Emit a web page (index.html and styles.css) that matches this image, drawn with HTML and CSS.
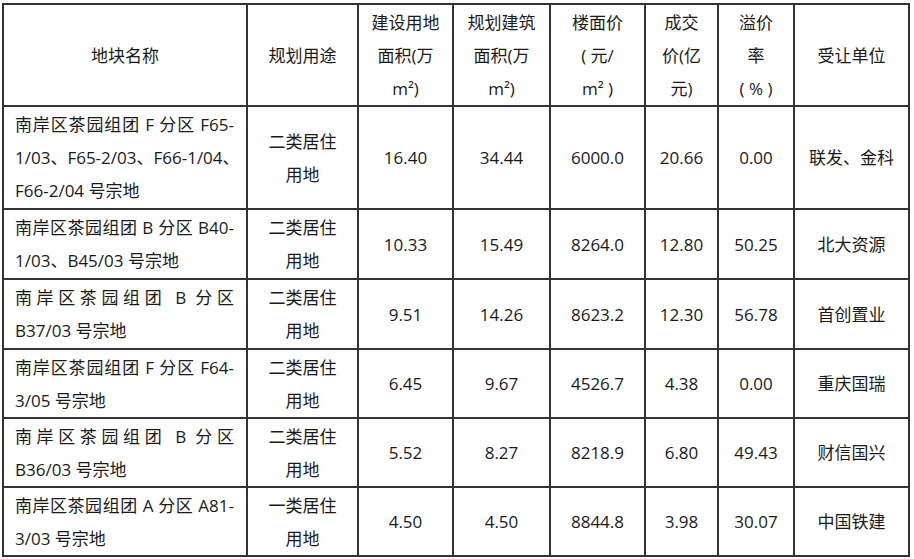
FILE: index.html
```html
<!DOCTYPE html>
<html lang="zh-CN">
<head>
<meta charset="utf-8">
<title>地块成交表</title>
<link rel="stylesheet" href="styles.css">
</head>
<body>
<table class="land">
  <colgroup>
    <col class="c1"><col class="c2"><col class="c3"><col class="c4"><col class="c5"><col class="c6"><col class="c7"><col class="c8">
  </colgroup>
  <thead>
    <tr class="head">
      <th>地块名称</th>
      <th>规划用途</th>
      <th>建设用地<br>面积(万<br>m²)</th>
      <th>规划建筑<br>面积(万<br>m²)</th>
      <th>楼面价<br>( 元/<br>m² )</th>
      <th>成交<br>价(亿<br>元)</th>
      <th>溢价<br>率<br>( % )</th>
      <th>受让单位</th>
    </tr>
  </thead>
  <tbody>
    <tr class="tall">
      <td class="name"><div class="j">南岸区茶园组团 F 分区 F65-</div><div class="j">1/03、F65-2/03、F66-1/04、</div><div>F66-2/04 号宗地</div></td>
      <td>二类居住<br>用地</td>
      <td>16.40</td><td>34.44</td><td>6000.0</td><td>20.66</td><td>0.00</td><td>联发、金科</td>
    </tr>
    <tr class="r2">
      <td class="name"><div class="j">南岸区茶园组团 B 分区 B40-</div><div>1/03、B45/03 号宗地</div></td>
      <td>二类居住<br>用地</td>
      <td>10.33</td><td>15.49</td><td>8264.0</td><td>12.80</td><td>50.25</td><td>北大资源</td>
    </tr>
    <tr class="r2">
      <td class="name"><div class="j">南岸区茶园组团 B 分区</div><div>B37/03 号宗地</div></td>
      <td>二类居住<br>用地</td>
      <td>9.51</td><td>14.26</td><td>8623.2</td><td>12.30</td><td>56.78</td><td>首创置业</td>
    </tr>
    <tr class="r3">
      <td class="name"><div class="j">南岸区茶园组团 F 分区 F64-</div><div>3/05 号宗地</div></td>
      <td>二类居住<br>用地</td>
      <td>6.45</td><td>9.67</td><td>4526.7</td><td>4.38</td><td>0.00</td><td>重庆国瑞</td>
    </tr>
    <tr class="r3">
      <td class="name"><div class="j">南岸区茶园组团 B 分区</div><div>B36/03 号宗地</div></td>
      <td>二类居住<br>用地</td>
      <td>5.52</td><td>8.27</td><td>8218.9</td><td>6.80</td><td>49.43</td><td>财信国兴</td>
    </tr>
    <tr class="r3">
      <td class="name"><div class="j">南岸区茶园组团 A 分区 A81-</div><div>3/03 号宗地</div></td>
      <td>一类居住<br>用地</td>
      <td>4.50</td><td>4.50</td><td>8844.8</td><td>3.98</td><td>30.07</td><td>中国铁建</td>
    </tr>
  </tbody>
</table>
</body>
</html>
```
FILE: styles.css
```css
html, body {
  margin: 0;
  padding: 0;
  background: #ffffff;
}

body {
  padding: 3px 0 0 2px;
  font-family: "Open Sans", "Noto Sans CJK SC", sans-serif;
  font-size: 17px;
  color: #1a1a1a;
}

.land {
  border-collapse: collapse;
  table-layout: fixed;
  width: 906px;
}

.c1 { width: 244px; }
.c2 { width: 111px; }
.c3 { width: 95px; }
.c4 { width: 97px; }
.c5 { width: 95px; }
.c6 { width: 73px; }
.c7 { width: 76px; }
.c8 { width: 115px; }

.land th,
.land td {
  border: 2px solid #333333;
  padding: 0 4px;
  line-height: 33px;
  text-align: center;
  vertical-align: middle;
  font-weight: normal;
  white-space: nowrap;
}

.land th {
  line-height: 33px;
}

.head { height: 102px; }
.tall { height: 103px; }
.r2 { height: 70px; }
.r3 { height: 69px; }

.land td.name {
  padding: 0 12px 0 11px;
  text-align: left;
}

.name .j {
  text-align: justify;
  text-align-last: justify;
}
```
